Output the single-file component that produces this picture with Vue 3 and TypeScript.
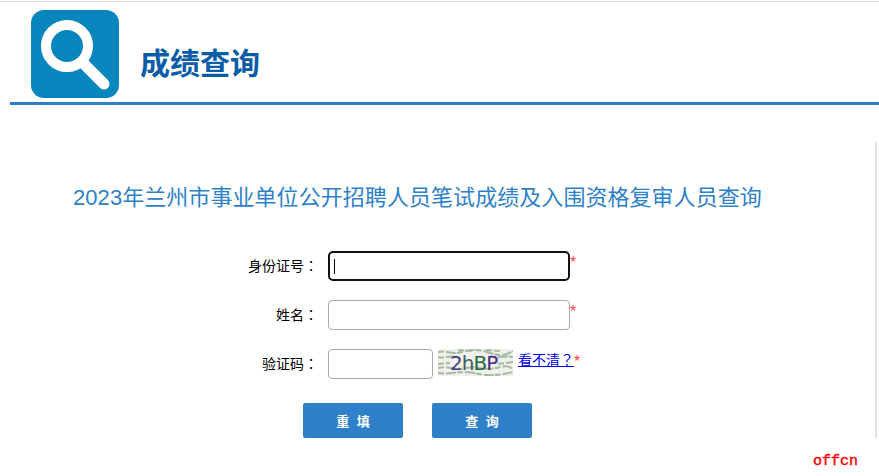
<script setup lang="ts">
// Score lookup page: header with logo, title, then the query form.
import { ref } from 'vue'

const idNo = ref('')
const name = ref('')
const code = ref('')

// scratchy noise behind the captcha text
const noise = [
  'M0 3 C8 1 14 6 24 3 S40 0 52 4 S68 6 75 2',
  'M0 8 C6 10 10 6 18 8 M52 7 C60 10 66 6 75 8',
  'M0 19 C10 16 16 22 28 19 S46 22 58 19 S70 17 75 20',
  'M0 24 C12 26 22 21 36 24 S60 27 75 23',
  'M0 15 L12 14 M60 15 L75 13 M20 1 L34 2 M48 1 L62 2',
]
</script>

<template>
  <div class="page">
    <header class="head">
      <svg class="logo" width="88" height="88" viewBox="0 0 88 88" aria-hidden="true">
        <rect width="88" height="88" rx="13" fill="#0686bd" />
        <circle cx="36" cy="36" r="21" fill="none" stroke="#fff" stroke-width="10" />
        <path d="M53 54 L73 74" stroke="#fff" stroke-width="11" stroke-linecap="round" />
      </svg>
      <h1 class="title">成绩查询</h1>
    </header>

    <main class="body">
      <h2 class="heading">2023年兰州市事业单位公开招聘人员笔试成绩及入围资格复审人员查询</h2>

      <form class="form" @submit.prevent>
        <div class="row">
          <label class="label">身份证号<span class="tc">：</span></label>
          <div class="focus-wrap">
            <input v-model="idNo" class="field wide focused" type="text" />
            <span class="caret"></span>
          </div>
          <span class="req">*</span>
        </div>
        <div class="row">
          <label class="label">姓名<span class="tc">：</span></label>
          <input v-model="name" class="field wide" type="text" />
          <span class="req">*</span>
        </div>
        <div class="row">
          <label class="label">验证码<span class="tc">：</span></label>
          <input v-model="code" class="field short" type="text" />
          <svg class="captcha" width="75" height="27" viewBox="0 0 75 27" aria-hidden="true">
            <rect width="75" height="27" fill="#f1f0ed" />
            <path v-for="d in noise" :key="d" :d="d" fill="none" stroke="#a3bba0" stroke-width="2" stroke-dasharray="6 2 10 1" />
            <text x="12" y="21" class="cap-text">
              <tspan fill="#3f3f78">2</tspan><tspan fill="#3c5f5e">h</tspan><tspan fill="#1f6a3c">B</tspan><tspan fill="#4a2a86">P</tspan>
            </text>
          </svg>
          <a class="refresh" href="#" @click.prevent>看不清<span class="tc">？</span></a>
          <span class="req near">*</span>
        </div>
        <div class="actions">
          <button class="btn" type="reset">重 填</button>
          <button class="btn" type="submit">查 询</button>
        </div>
      </form>
    </main>

    <span class="mark">offcn</span>
  </div>
</template>

<style>
html, body { margin: 0; background: #fff; overflow: hidden; }
</style>

<style scoped>
.page {
  position: relative;
  height: 476px;
  box-sizing: border-box;
  padding-top: 1px;
  font-family: "Liberation Sans", "Noto Sans CJK SC", sans-serif;
  overflow: hidden;
}

.page::before {
  content: "";
  display: block;
  height: 1px;
  background: #dcdcdc;
}

.head {
  display: flex;
  align-items: flex-end;
  margin-left: 10px;
  padding: 8px 0 0 21px;
  box-sizing: border-box;
  border-bottom: 3px solid #2e81c8;
  height: 103px;
}

.logo { flex-shrink: 0; margin-bottom: 4px; }

.title {
  margin: 0 0 18px 21px;
  font-size: 30px;
  line-height: 40px;
  font-weight: 700;
  color: #0b5ca6;
}

.body {
  width: 877px;
  height: 296px;
  margin-top: 37px;
  box-sizing: border-box;
  border-right: 2px solid #e2e2e2;
  padding-top: 39px;
}

.heading {
  margin: 0 0 0 73px;
  font-size: 22px;
  line-height: 34px;
  font-weight: 400;
  letter-spacing: 0.06px;
  color: #2e81c8;
  white-space: nowrap;
}

.form {
  display: flex;
  flex-direction: column;
  gap: 19px;
  margin-top: 36px;
}

.row {
  display: flex;
  align-items: flex-start;
  height: 30px;
}

.label {
  width: 328px;
  padding-right: 10px;
  box-sizing: border-box;
  text-align: right;
  font-size: 14px;
  line-height: 28px;
  color: #000;
  flex-shrink: 0;
}

.tc { font-family: "Noto Sans CJK TC", sans-serif; }

.field {
  display: block;
  height: 30px;
  box-sizing: border-box;
  border: 1px solid #a9a9a9;
  border-radius: 4px;
  background: #fff;
  outline: none;
  padding: 0 4px;
}

.wide { width: 242px; }
.short { width: 105px; }

.focus-wrap { position: relative; }
.focused { border: 2px solid #111; border-radius: 5px; }

.caret {
  position: absolute;
  left: 6px;
  top: 8px;
  width: 1px;
  height: 15px;
  background: #000;
}

.req {
  color: #f44;
  font-size: 16px;
  line-height: 24px;
}

.captcha { display: block; margin-left: 5px; flex-shrink: 0; }

.cap-text {
  font-family: "DejaVu Sans", sans-serif;
  font-size: 20px;
  letter-spacing: -1px;
}

.refresh {
  margin-left: 5px;
  font-size: 14px;
  line-height: 20px;
  color: #00e;
  text-decoration: underline;
}

.near { margin-top: 1px; }

.actions {
  display: flex;
  gap: 29px;
  margin: 5px 0 0 303px;
}

.btn {
  width: 100px;
  height: 35px;
  border: 0;
  border-radius: 2px;
  background: #2e81c8;
  color: #fff;
  font-family: inherit;
  font-size: 13px;
  font-weight: 700;
  word-spacing: 4px;
}

.mark {
  position: absolute;
  left: 813px;
  top: 453px;
  font-family: "Liberation Mono", monospace;
  font-size: 15px;
  font-weight: 400;
  -webkit-text-stroke: 0.4px #f00;
  line-height: 18px;
  color: #f00;
}
</style>
